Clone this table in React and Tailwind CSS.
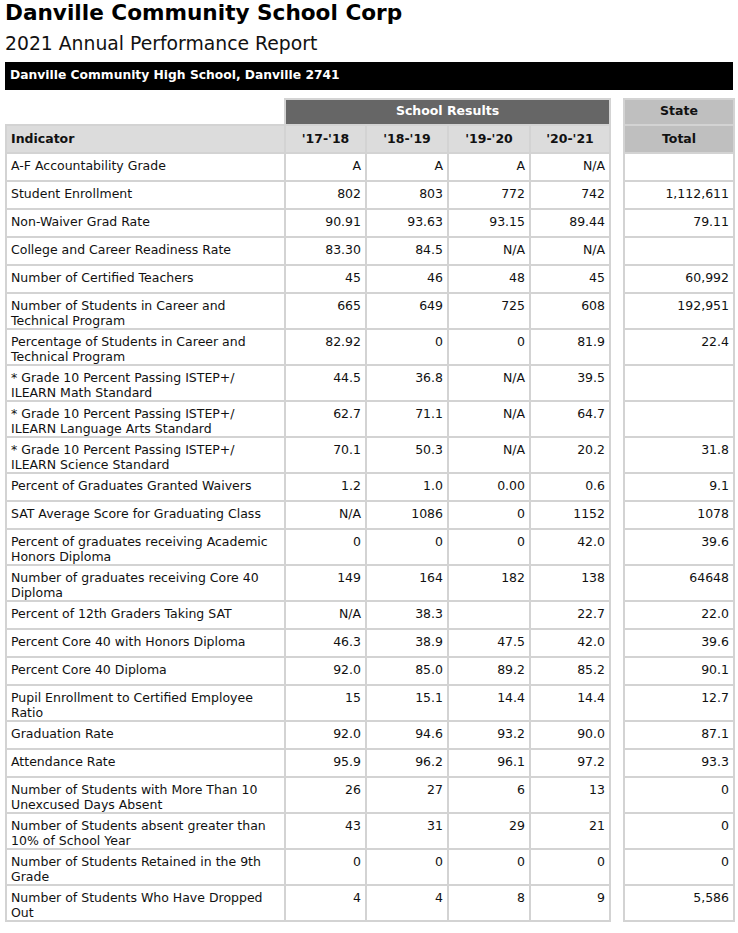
import React from "react";

const filas = [
  ["A-F Accountability Grade", ["A", "A", "A", "N/A"], ""],
  ["Student Enrollment", ["802", "803", "772", "742"], "1,112,611"],
  ["Non-Waiver Grad Rate", ["90.91", "93.63", "93.15", "89.44"], "79.11"],
  ["College and Career Readiness Rate", ["83.30", "84.5", "N/A", "N/A"], ""],
  ["Number of Certified Teachers", ["45", "46", "48", "45"], "60,992"],
  ["Number of Students in Career and\nTechnical Program", ["665", "649", "725", "608"], "192,951"],
  ["Percentage of Students in Career and\nTechnical Program", ["82.92", "0", "0", "81.9"], "22.4"],
  ["* Grade 10 Percent Passing ISTEP+/\nILEARN Math Standard", ["44.5", "36.8", "N/A", "39.5"], ""],
  ["* Grade 10 Percent Passing ISTEP+/\nILEARN Language Arts Standard", ["62.7", "71.1", "N/A", "64.7"], ""],
  ["* Grade 10 Percent Passing ISTEP+/\nILEARN Science Standard", ["70.1", "50.3", "N/A", "20.2"], "31.8"],
  ["Percent of Graduates Granted Waivers", ["1.2", "1.0", "0.00", "0.6"], "9.1"],
  ["SAT Average Score for Graduating Class", ["N/A", "1086", "0", "1152"], "1078"],
  ["Percent of graduates receiving Academic\nHonors Diploma", ["0", "0", "0", "42.0"], "39.6"],
  ["Number of graduates receiving Core 40\nDiploma", ["149", "164", "182", "138"], "64648"],
  ["Percent of 12th Graders Taking SAT", ["N/A", "38.3", "", "22.7"], "22.0"],
  ["Percent Core 40 with Honors Diploma", ["46.3", "38.9", "47.5", "42.0"], "39.6"],
  ["Percent Core 40 Diploma", ["92.0", "85.0", "89.2", "85.2"], "90.1"],
  ["Pupil Enrollment to Certified Employee\nRatio", ["15", "15.1", "14.4", "14.4"], "12.7"],
  ["Graduation Rate", ["92.0", "94.6", "93.2", "90.0"], "87.1"],
  ["Attendance Rate", ["95.9", "96.2", "96.1", "97.2"], "93.3"],
  ["Number of Students with More Than 10\nUnexcused Days Absent", ["26", "27", "6", "13"], "0"],
  ["Number of Students absent greater than\n10% of School Year", ["43", "31", "29", "21"], "0"],
  ["Number of Students Retained in the 9th\nGrade", ["0", "0", "0", "0"], "0"],
  ["Number of Students Who Have Dropped\nOut", ["4", "4", "8", "9"], "5,586"],
];

const anios = ["'17-'18", "'18-'19", "'19-'20", "'20-'21"];

const celda = "border-2 border-[#d3d3d3] align-top pt-[4px] pb-0 px-[4px]";

export default function App() {
  return (
    <div className="bg-white w-[738px] min-h-[933px] px-[5px] text-[#111] font-['DejaVu_Sans',Verdana,sans-serif]">
      <h1 className="text-[21.6px] font-bold leading-[24px] pt-[1px] text-black">Danville Community School Corp</h1>
      <h2 className="text-[18.8px] leading-[22px] mt-[8px]">2021 Annual Performance Report</h2>
      <div className="bg-black text-white text-[12.3px] font-bold h-[28px] mt-[7px] px-[5px] pt-[4px]">
        Danville Community High School, Danville 2741
      </div>

      <table className="mt-[8px] w-[728px] border-collapse table-fixed text-[12.5px] leading-[15px]">
        <colgroup>
          <col className="w-[279px]" />
          <col className="w-[81px]" />
          <col className="w-[82px]" />
          <col className="w-[82px]" />
          <col className="w-[80px]" />
          <col className="w-[14px]" />
          <col className="w-[110px]" />
        </colgroup>
        <thead>
          <tr className="h-[26px]">
            <th className="border-0"></th>
            <th colSpan={4} className="bg-[#666666] text-white font-bold text-center pb-[3px] border-2 border-[#d3d3d3]">
              School Results
            </th>
            <th className="border-y-0"></th>
            <th className="bg-[#bfbfbf] font-bold text-center pb-[3px] border-2 border-[#d3d3d3]">State</th>
          </tr>
          <tr className="h-[28px]">
            <th className="bg-[#dcdcdc] text-left font-bold px-[4px] pb-[1px] border-2 border-[#d3d3d3]">Indicator</th>
            {anios.map((a) => (
              <th key={a} className="bg-[#dcdcdc] text-center font-bold pb-[1px] border-2 border-[#d3d3d3]">
                {a}
              </th>
            ))}
            <th className="border-y-0 border-x-2 border-[#d3d3d3]"></th>
            <th className="bg-[#bfbfbf] text-center font-bold pb-[1px] border-2 border-[#d3d3d3]">Total</th>
          </tr>
        </thead>
        <tbody>
          {filas.map(([nombre, valores, estado], i) => (
            <tr key={i} className="h-[28px]">
              <td className={`${celda} text-left whitespace-pre-line`}>{nombre}</td>
              {valores.map((v, j) => (
                <td key={j} className={`${celda} text-right`}>
                  {v}
                </td>
              ))}
              <td className="border-y-0 border-x-2 border-[#d3d3d3]"></td>
              <td className={`${celda} text-right`}>{estado}</td>
            </tr>
          ))}
        </tbody>
      </table>
    </div>
  );
}
